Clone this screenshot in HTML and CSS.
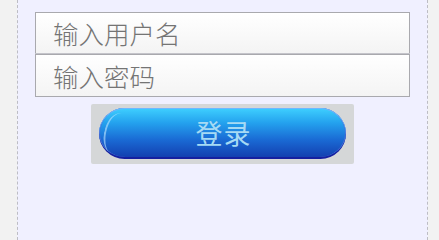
FILE: index.html
```html
<!DOCTYPE html>
<html lang="zh">
<head>
<meta charset="utf-8">
<title>登录</title>
<link rel="stylesheet" href="styles.css">
</head>
<body>
<div class="page">
  <div class="panel">
    <div class="fields">
      <div class="field"><span class="ph">输入用户名</span></div>
      <div class="field"><span class="ph">输入密码</span></div>
    </div>
    <div class="btn-wrap">
      <div class="btn">
        <span class="shine"></span>
        <span class="label">登录</span>
      </div>
    </div>
  </div>
</div>
</body>
</html>
```
FILE: styles.css
```css
html, body {
  margin: 0;
  padding: 0;
  min-height: 100vh;
  background: #f2f2f2;
  font-family: "Noto Sans CJK SC", "Noto Sans", sans-serif;
}
.page {
  min-height: 100vh;
  display: flex;
  padding-left: 17px;
}
.panel {
  box-sizing: border-box;
  width: 411px;
  min-height: 100vh;
  background: #f0f0ff;
  border-left: 1px dashed #bdbdc4;
  border-right: 1px dashed #bdbdc4;
  display: flex;
  flex-direction: column;
  align-items: center;
  padding-top: 12px;
}
.fields {
  display: flex;
  flex-direction: column;
  width: 375px;
}
.field {
  box-sizing: border-box;
  height: 42px;
  border: 1px solid #a9a9ae;
  background: linear-gradient(#ffffff, #f4f4f4);
  display: flex;
  align-items: center;
  padding-left: 17px;
}
.field + .field {
  height: 43px;
  box-shadow: 0 -1px 0 #c4c4ca;
}
.ph {
  color: #747474;
  font-size: 25.5px;
  line-height: 1;
  font-weight: 300;
}
.btn-wrap {
  margin-top: 7px;
  width: 263px;
  height: 60px;
  box-sizing: border-box;
  background: #d5d7d8;
  border-radius: 2px;
  padding: 4px 8px 0 8px;
}
.btn {
  position: relative;
  width: 247px;
  height: 51px;
  box-sizing: border-box;
  border-radius: 26px;
  background: linear-gradient(#3fd0ff 0%, #24a2ee 30%, #1a6ad4 65%, #1340b0 100%);
  border-bottom: 2px solid #1520a0;
  box-shadow: inset 0 1px 0 #6fb8ff, inset 1px 0 0 #4a70d8, inset -1px 0 0 #4a70d8;
  display: flex;
  align-items: center;
  justify-content: center;
  overflow: hidden;
}
.shine {
  position: absolute;
  left: 5px;
  top: 5px;
  width: 26px;
  height: 42px;
  border-radius: 50%;
  border-left: 2px solid rgba(190, 230, 255, 0.6);
  box-sizing: border-box;
  transform: rotate(12deg);
}
.label {
  color: #a6daf4;
  font-size: 27px;
  line-height: 1;
  letter-spacing: 1px;
  margin-left: 2px;
}
```
